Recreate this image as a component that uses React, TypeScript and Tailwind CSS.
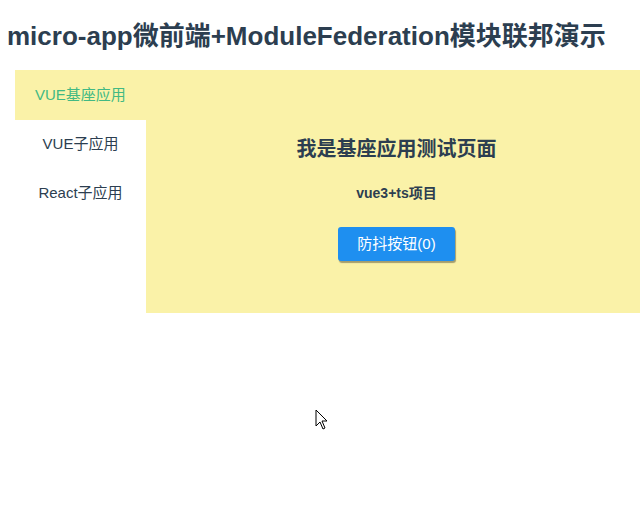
export default function App() {
  const font = { fontFamily: '"Liberation Sans", Arial, "Noto Sans CJK SC", sans-serif' }
  return (
    <div className="relative min-h-[520px] w-[640px] overflow-hidden bg-white text-[#2c3e50]" style={font}>
      <h1 className="h-[36px] mt-[18px] pl-[7px] text-[26px] font-bold leading-[36px] whitespace-nowrap">
        micro-app微前端+ModuleFederation模块联邦演示
      </h1>
      <div className="ml-[15px] mt-[16px]">
        <div className="flex h-[50px] items-center bg-[#faf2a8] pl-[20px] text-[15px] text-[#42b983]">
          VUE基座应用
        </div>
        <div className="flex">
          <div className="flex w-[131px] flex-col bg-white text-[15px] text-[#2c3e50]">
            <div className="flex h-[49px] items-center justify-center">VUE子应用</div>
            <div className="flex h-[49px] items-center justify-center">React子应用</div>
          </div>
          <div className="flex h-[193px] flex-1 flex-col items-center bg-[#faf2a8] pl-[7px]">
            <h3 className="mt-[17px] text-[20px] font-bold leading-[24px]">我是基座应用测试页面</h3>
            <p className="mt-[22px] text-[14px] font-bold leading-[20px]">vue3+ts项目</p>
            <button className="mt-[24px] h-[34px] rounded-[3px] bg-[#1e8ff0] px-[19px] text-[15px] text-white shadow-[1px_2px_1px_rgba(0,0,0,0.35)]">
              防抖按钮(0)
            </button>
          </div>
        </div>
      </div>
      <svg className="absolute left-[315px] top-[409px]" width="14" height="22" viewBox="0 0 14 22">
        <path d="M1 1 L1 17 L5 13 L8 20 L10 19 L7 12 L12 12 Z" fill="white" stroke="black" strokeWidth="1" strokeLinejoin="miter" />
      </svg>
    </div>
  )
}
